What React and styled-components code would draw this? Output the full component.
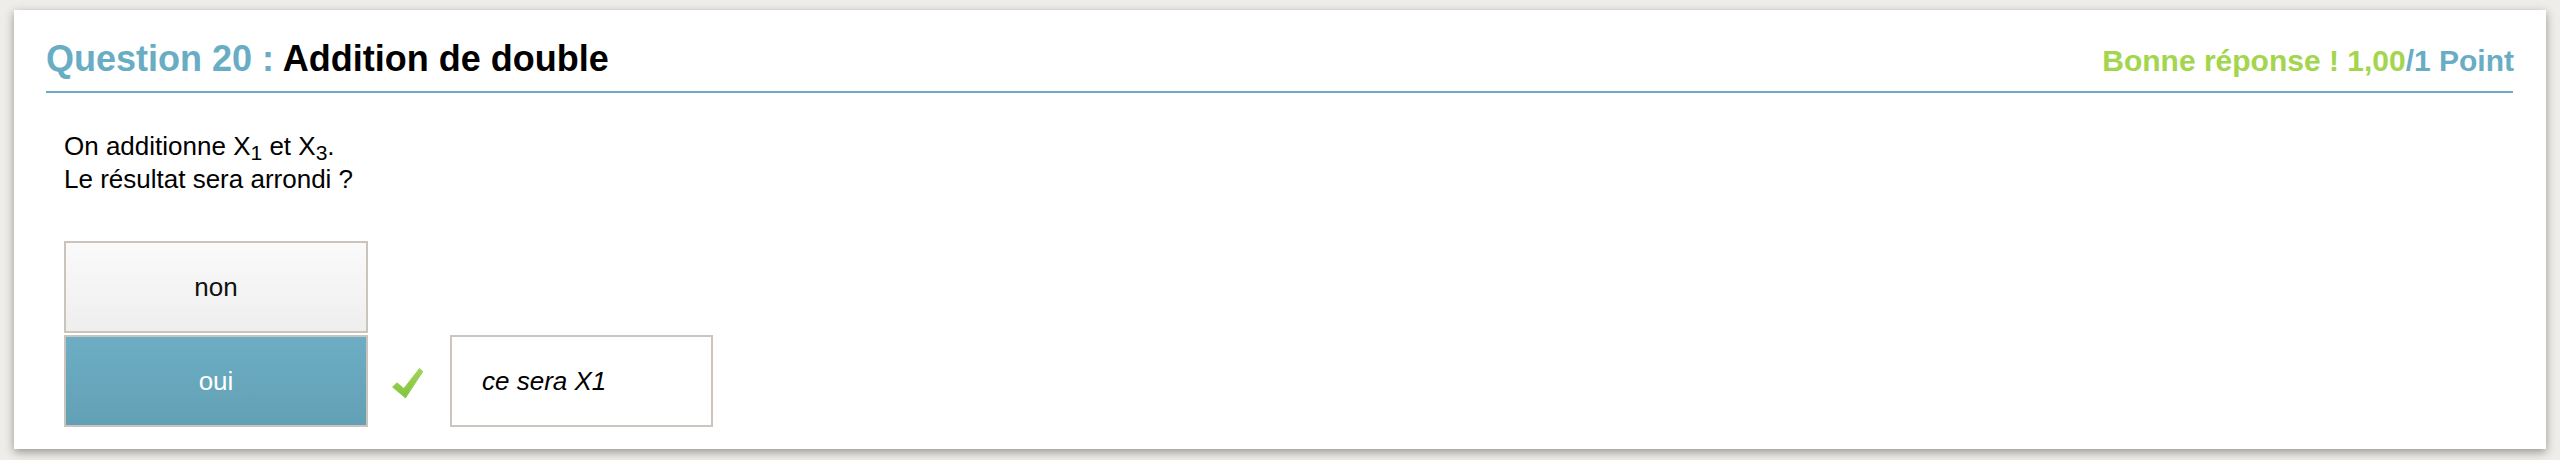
import React from "react";
import styled, { createGlobalStyle } from "styled-components";

const GlobalStyle = createGlobalStyle`
  html, body {
    margin: 0;
    padding: 0;
    background: #eeede9;
  }
  body {
    font-family: "Liberation Sans", Arial, Helvetica, sans-serif;
    color: #000;
  }
`;

const Page = styled.div`
  padding: 10px 14px 12px;
`;

const Card = styled.section`
  background: #fff;
  box-shadow: 0 3px 9px rgba(0, 0, 0, 0.38);
  padding: 29px 33px 22px 32px;
`;

const Header = styled.header`
  display: flex;
  justify-content: space-between;
  align-items: baseline;
  border-bottom: 2px solid #68adc4;
  padding-bottom: 10px;
`;

const Title = styled.h2`
  margin: 0;
  font-size: 36px;
  line-height: 40px;
  font-weight: bold;
  color: #000;
`;

const Accent = styled.span`
  color: ${(p) => (p.$tone === "green" ? "#a3d54d" : "#68adc4")};
`;

const Score = styled.div`
  font-size: 30px;
  line-height: 40px;
  font-weight: bold;
  color: #a3d54d;
  margin-right: -1px;
`;

const Body = styled.div`
  padding: 0 18px;
`;

const Statement = styled.p`
  margin: 37px 0 0;
  font-size: 26px;
  line-height: 33px;
`;

const Sub = styled.sub`
  font-size: 21px;
  line-height: 0;
  vertical-align: -5px;
`;

const Answers = styled.div`
  display: flex;
  flex-direction: column;
  gap: 2px;
  margin-top: 45px;
`;

const AnswerRow = styled.div`
  display: flex;
  align-items: center;
`;

const Choice = styled.div`
  box-sizing: border-box;
  width: 304px;
  height: 92px;
  border: 2px solid #cbc4bc;
  display: flex;
  align-items: center;
  justify-content: center;
  font-size: 26px;
  color: ${(p) => (p.$selected ? "#fff" : "#111")};
  background: ${(p) =>
    p.$selected
      ? "linear-gradient(to bottom, #6daec4, #62a0b5)"
      : "linear-gradient(to bottom, #fafafa, #eeeeee)"};
`;

const Check = styled.svg`
  width: 31px;
  height: 31px;
  margin-left: 24px;
  margin-top: 5px;
  flex: none;
`;

const Feedback = styled.div`
  box-sizing: border-box;
  width: 263px;
  height: 92px;
  margin-left: 27px;
  border: 2px solid #cdc5bd;
  display: flex;
  align-items: center;
  padding-left: 30px;
  font-size: 26px;
  font-style: italic;
  color: #000;
`;

function CheckIcon() {
  return (
    <Check viewBox="0 0 31 31" aria-hidden="true">
      <defs>
        <linearGradient id="chk" x1="0" y1="0" x2="0" y2="1">
          <stop offset="0" stopColor="#9fd656" />
          <stop offset="1" stopColor="#84c23e" />
        </linearGradient>
      </defs>
      <path
        d="M0.5 19 L5 14.8 L11.8 20.5 L27.5 0.5 L30.8 3.5 L13.5 30 Z"
        fill="url(#chk)"
        stroke="#8ccb48"
        strokeWidth="0.8"
        strokeLinejoin="round"
      />
    </Check>
  );
}

export default function App() {
  return (
    <>
      <GlobalStyle />
      <Page>
        <Card>
          <Header>
            <Title>
              <Accent>Question 20 : </Accent>Addition de double
            </Title>
            <Score>
              Bonne réponse ! 1,00<Accent>/1 Point</Accent>
            </Score>
          </Header>
          <Body>
            <Statement>
              On additionne X<Sub>1</Sub> et X<Sub>3</Sub>.
              <br />
              Le résultat sera arrondi ?
            </Statement>
            <Answers>
              <AnswerRow>
                <Choice>non</Choice>
              </AnswerRow>
              <AnswerRow>
                <Choice $selected>oui</Choice>
                <CheckIcon />
                <Feedback>ce sera X1</Feedback>
              </AnswerRow>
            </Answers>
          </Body>
        </Card>
      </Page>
    </>
  );
}
